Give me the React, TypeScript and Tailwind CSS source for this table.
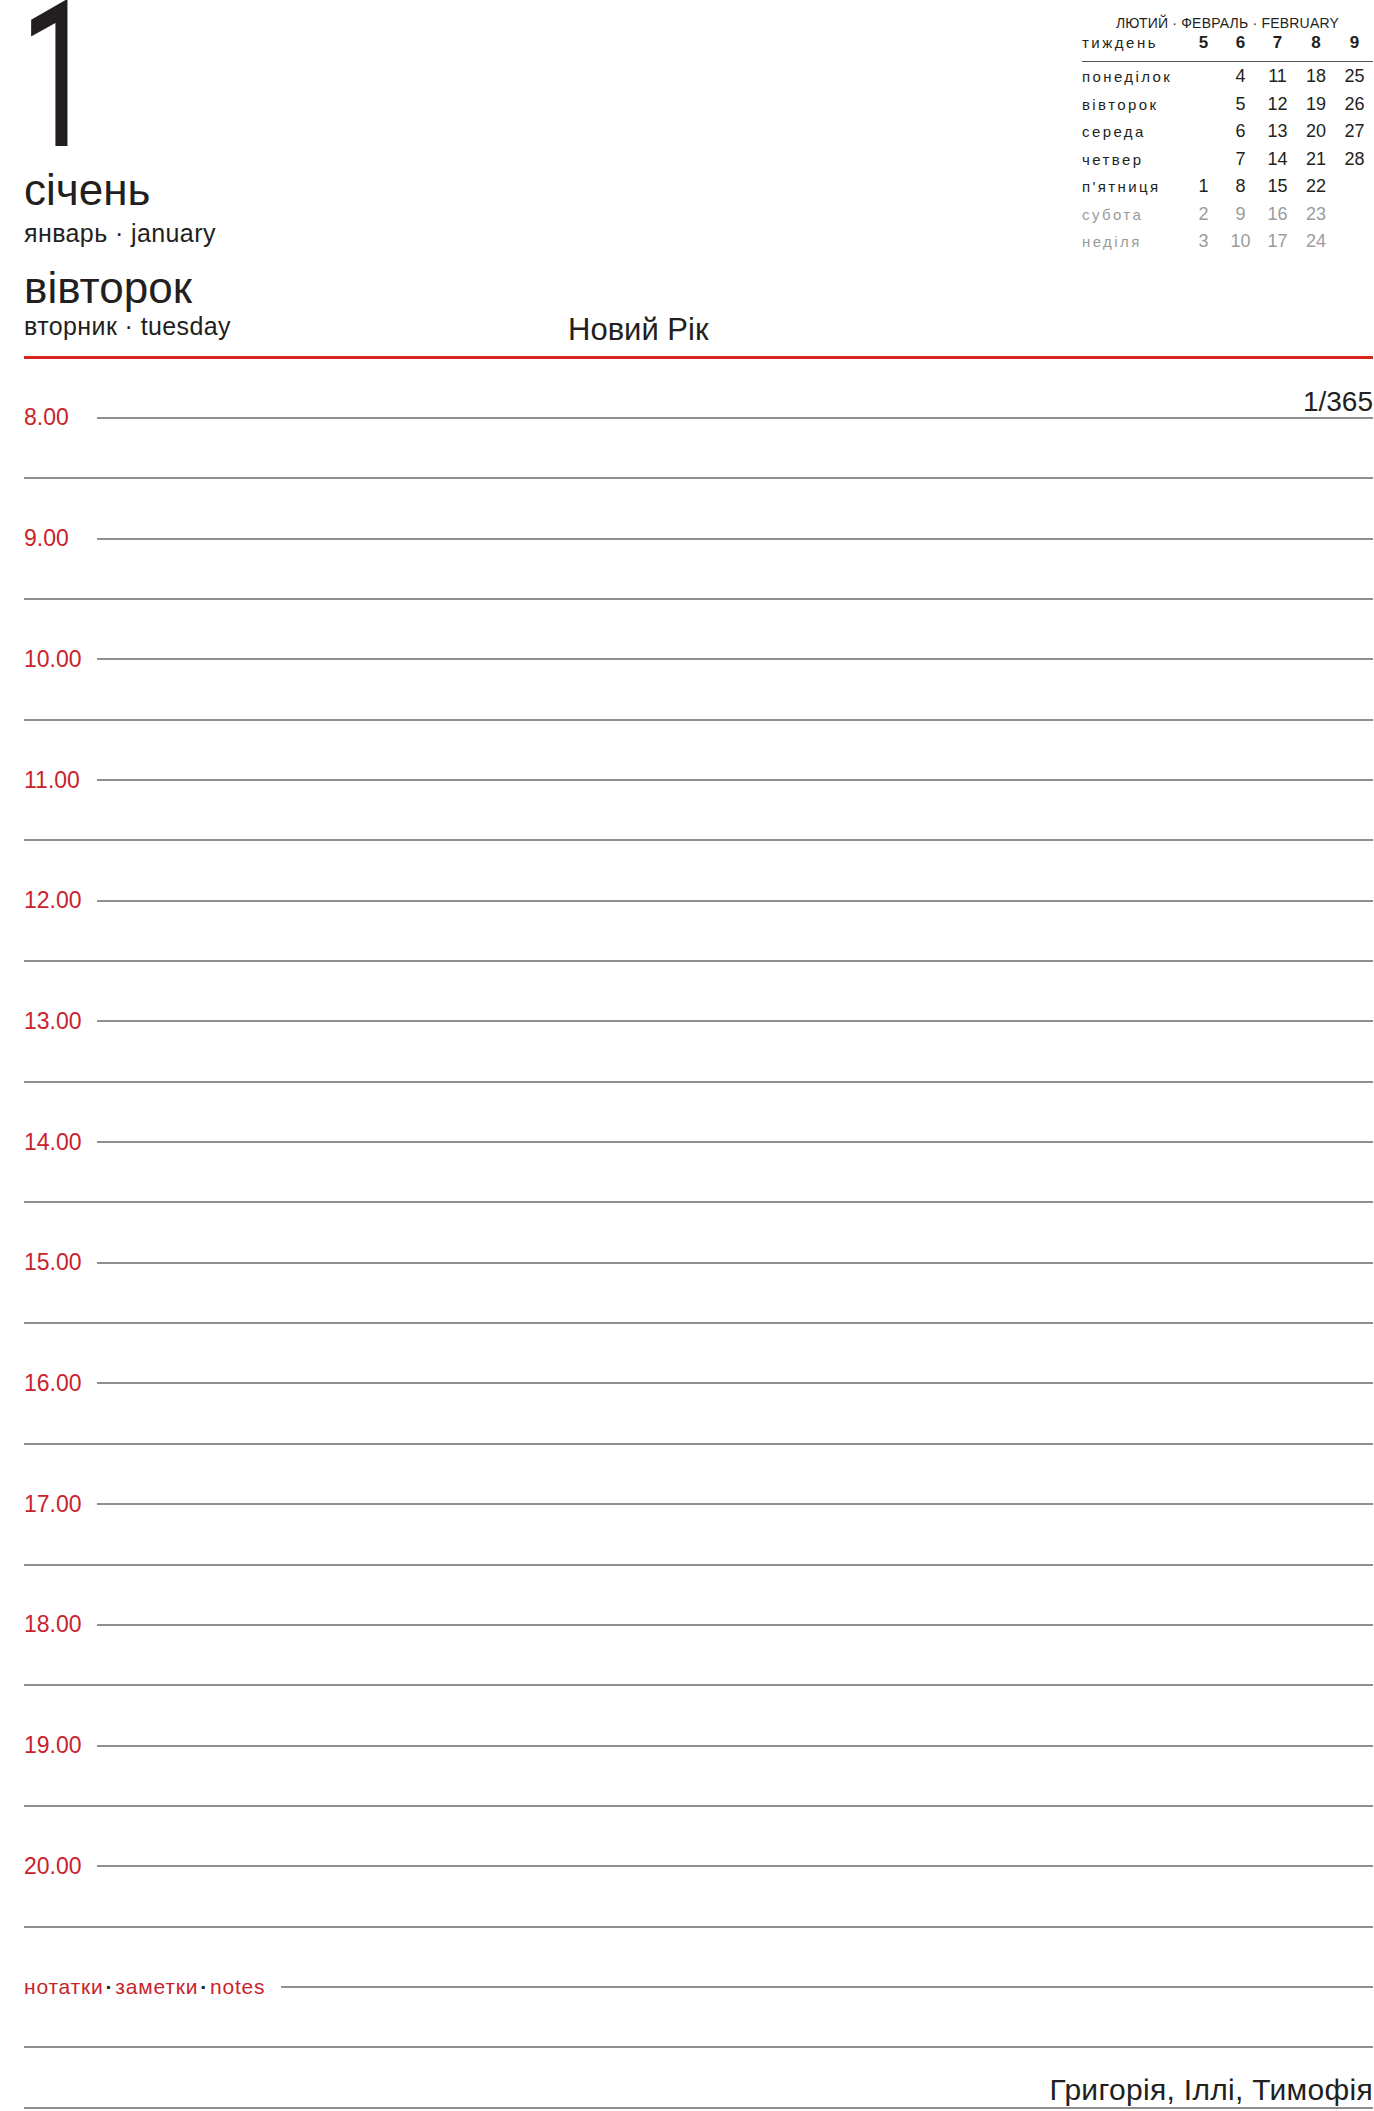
import React from "react";

const hours = ["8.00", "9.00", "10.00", "11.00", "12.00", "13.00", "14.00", "15.00", "16.00", "17.00", "18.00", "19.00", "20.00"];

const weeks = ["5", "6", "7", "8", "9"];

const calRows = [
  { name: "понеділок", days: ["", "4", "11", "18", "25"], muted: false },
  { name: "вівторок", days: ["", "5", "12", "19", "26"], muted: false },
  { name: "середа", days: ["", "6", "13", "20", "27"], muted: false },
  { name: "четвер", days: ["", "7", "14", "21", "28"], muted: false },
  { name: "п'ятниця", days: ["1", "8", "15", "22", ""], muted: false },
  { name: "субота", days: ["2", "9", "16", "23", ""], muted: true },
  { name: "неділя", days: ["3", "10", "17", "24", ""], muted: true },
];

const Rule = () => <div className="h-[2px] flex-1 bg-[#8f8f8f]" />;

const MiniCalendar = () => (
  <div className="w-[291px] self-start pt-[16px] text-[#231f20]">
    <div className="text-center text-[14px] leading-[14px] tracking-[0.2px]">ЛЮТИЙ · ФЕВРАЛЬ · FEBRUARY</div>
    <div className="mt-[4px] grid grid-cols-[103px_37px_37px_37px_40px_37px] items-baseline border-b border-[#555] pb-[9px] leading-[18px]">
      <span className="text-[15px] tracking-[2.5px]">тиждень</span>
      {weeks.map((w) => (
        <span key={w} className="text-center text-[17px] font-bold">{w}</span>
      ))}
    </div>
    <div className="mt-[1px]">
      {calRows.map((row) => (
        <div
          key={row.name}
          className={`grid grid-cols-[103px_37px_37px_37px_40px_37px] items-baseline leading-[27.5px] ${row.muted ? "text-[#9b9b9b]" : ""}`}
        >
          <span className="text-[15px] tracking-[2.4px]">{row.name}</span>
          {row.days.map((d, i) => (
            <span key={i} className="text-center text-[18px]">{d}</span>
          ))}
        </div>
      ))}
    </div>
  </div>
);

export default function App() {
  return (
    <div className="h-[2111px] w-[1374px] overflow-hidden bg-white pl-[24px] pr-[1px] font-['Liberation_Sans',Arial,sans-serif] text-[#231f20]">
      <div className="flex">
        <div className="flex w-[544px] flex-col pb-[17px]">
          <div className="mt-[3px] h-[145px] font-['Roboto',sans-serif] text-[205px] leading-[146px]">
            <span className="-ml-[4px] inline-block origin-left [transform:scaleX(0.65)]">1</span>
          </div>
          <div className="mt-[20px] text-[44px] leading-[44px]">січень</div>
          <div className="mt-[9px] text-[25px] leading-[25px] tracking-[0.4px]">январь · january</div>
          <div className="mt-[20px] text-[44px] leading-[44px]">вівторок</div>
          <div className="mt-[4px] text-[25px] leading-[25px] tracking-[0.4px]">вторник · tuesday</div>
        </div>
        <div className="flex-1 self-end pb-[10px] text-[31px] leading-[32px]">Новий Рік</div>
        <MiniCalendar />
      </div>

      <div className="h-[3px] bg-[#d7261e]" />

      <div className="mt-[28.8px]">
        {hours.map((h, idx) => (
          <div key={h}>
            <div className="relative flex h-[60.35px] items-center">
              <span className="w-[73px] text-[23px] leading-[23px] text-[#c8232c]">{h}</span>
              <Rule />
              {idx === 0 && (
                <span className="absolute bottom-[calc(50%+2px)] right-0 text-[28px] leading-[28px]">1/365</span>
              )}
            </div>
            <div className="flex h-[60.35px] items-center">
              <Rule />
            </div>
          </div>
        ))}

        <div className="flex h-[60.35px] items-center">
          <span className="w-[257px] text-[21px] leading-[21px] tracking-[0.8px] text-[#c8232c]">
            нотатки<span className="mx-[2px] font-bold text-[#231f20]">·</span>заметки<span className="mx-[2px] font-bold text-[#231f20]">·</span>notes
          </span>
          <Rule />
        </div>
        <div className="flex h-[60.35px] items-center">
          <Rule />
        </div>
        <div className="relative flex h-[60.35px] items-center">
          <Rule />
          <span className="absolute bottom-[calc(50%+3px)] right-0 text-[30px] leading-[30px] tracking-[0.3px]">Григорія, Іллі, Тимофія</span>
        </div>
      </div>
    </div>
  );
}
